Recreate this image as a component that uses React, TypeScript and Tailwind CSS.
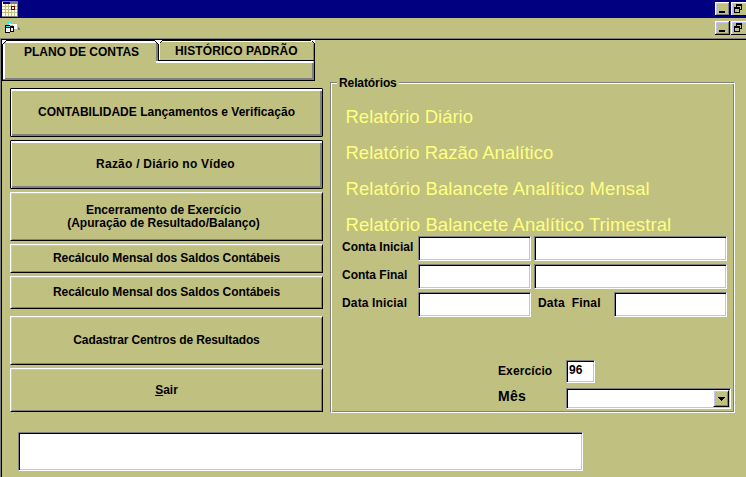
import React from "react";

const raised =
  "border border-t-white border-l-white border-r-black border-b-black shadow-[inset_1px_1px_0_#c0c0ff,inset_-1px_-1px_0_#808080]";

function Field({ className = "", children }: { className?: string; children?: React.ReactNode }) {
  return (
    <div
      className={`shrink-0 border border-t-[#808080] border-l-[#808080] border-r-white border-b-white bg-white shadow-[inset_1px_1px_0_#000,inset_-1px_-1px_0_#c0c0ff] ${className}`}
    >
      {children}
    </div>
  );
}

function PushButton({
  className = "",
  framed = false,
  children,
}: {
  className?: string;
  framed?: boolean;
  children: React.ReactNode;
}) {
  const look = framed
    ? "rounded-[1px] border border-black shadow-[inset_1px_2px_0_#fff,inset_-2px_-2px_0_#808080]"
    : raised;
  return (
    <button
      className={`flex w-[313px] shrink-0 items-center justify-center text-center leading-[13px] font-bold whitespace-nowrap ${look} ${className}`}
    >
      {children}
    </button>
  );
}

function WindowButtons() {
  return (
    <div className="flex h-[14px] w-[31px] gap-px overflow-hidden">
      <svg width="15" height="14" shapeRendering="crispEdges">
        <path fill="#000" d="M0 0h15v14H0z" />
        <path fill="#fff" d="M0 0h14v1H1v12H0z" />
        <path fill="#808080" d="M1 1h13v12H1z" />
        <path fill="#c0c0ff" d="M1 1h12v11H1z" />
        <path fill="#c0c080" d="M2 2h11v10H2z" />
        <path fill="#000" d="M4 9h6v2H4z" />
      </svg>
      <svg width="15" height="14" shapeRendering="crispEdges">
        <path fill="#000" d="M0 0h15v14H0z" />
        <path fill="#fff" d="M0 0h15v1H1v12H0z" />
        <path fill="#c0c0ff" d="M1 1h14v12H1z" />
        <path fill="#c0c080" d="M2 2h13v11H2z" />
        <path fill="#000" fillRule="evenodd" d="M5 2h6v6H9v3H3V5h2zM6 4v1h3v2h1V4zM4 7v3h4V7z" />
      </svg>
    </div>
  );
}

function CalendarIcon() {
  return (
    <svg width="16" height="16" shapeRendering="crispEdges">
      <path fill="#ffffe8" d="M0 0h16v15H0z" />
      <path fill="#808080" d="M0 0h16v1H0zM8 0h8v3H8z" />
      <path fill="#000080" d="M1 1h7v2H1z" />
      <path
        stroke="#c0c080"
        fill="none"
        d="M0 5.500h15M0 8.500h15M0 11.500h15M3.500 3v12M6.500 3v12M9.500 3v12M12.500 3v12"
      />
      <path stroke="#800000" fill="none" d="M9.500 5.500h3v3h-3z" />
      <path fill="#808080" d="M15 3h1v12h-1zM0 15h16v1H0z" />
    </svg>
  );
}

function FormsIcon() {
  return (
    <svg width="16" height="14" shapeRendering="crispEdges">
      <path fill="#fff" d="M4 2h8v6H4z" />
      <path fill="#0ff" d="M3 1h4v1H3zM6 2h6v1H6z" />
      <path fill="#808080" d="M13 6h1v1h1v2h-2z" />
      <path fill="#000" d="M0 4h8v1h1v6H5v1H0z" />
      <path fill="#fff" d="M1 7h4v4H1zM6 7h2v3H6z" />
      <path fill="#0ff" d="M1 5h4v1H1zM5 4h3v1H5z" />
    </svg>
  );
}

function Tabs() {
  return (
    <div className="relative h-[41px] w-[313px]">
      <svg className="absolute inset-0" width="313" height="41" shapeRendering="crispEdges">
        <path fill="#000" d="M0 0h313v1H0zM312 0h1v41h-1zM0 40h313v1H0zM0 0h1v41H0z" />
        <path fill="#808080" d="M1 38h311v2H1zM310 23h2v17h-2z" />
        <path fill="#fff" d="M1 4h2v35H1zM4 1h150v2H4zM158 1h152v1H158z" />
        <path fill="#fff" d="M0 0h4v2H3v1H2v1H0zM153 0h7v1h-1v1h-1v1h-1v1h-1V3h-1V2h-1V1h-1zM309 0h4v4h-1V3h-1V2h-1V1h-1z" />
        <path fill="#000" d="M1 3h1v1H1zM2 2h1v1H2zM3 1h1v1H3zM153 1h1v1h1v1h1v1h1V3h1V2h1V1h1v1h-1v1h-1v1h-1v16h-1V4h-1V3h-1V2h-1zM310 1h1v1h1v1h1v1h-1V3h-1V2h-1zM156 20h156v1H156z" />
        <path fill="#808080" d="M154 3h1v18h-1zM155 4h1v17h-1zM311 4h1v16h-1z" />
        <path fill="#fff" d="M157 3h1v17h-1zM154 21h157v2H154z" />
      </svg>
      <div className="relative flex pt-[4px] leading-[16px] font-bold whitespace-nowrap">
        <span className="w-[150px] pl-[22px]">PLANO DE CONTAS</span>
        <span className="-mt-px pl-[23px] tracking-[0.1px]">HISTÓRICO PADRÃO</span>
      </div>
    </div>
  );
}

function Reports() {
  return (
    <section className="mt-[42px] ml-[7px] h-[331px] w-[405px] border border-[#808080] border-r-white border-b-white shadow-[inset_1px_1px_0_#fff,inset_-1px_-1px_0_#808080]">
      <h2 className="-mt-[8px] ml-[6px] h-[16px] w-[62px] bg-[#c0c080] pl-[2px] leading-[16px] font-bold tracking-[-0.1px]">
        Relatórios
      </h2>
      <div className="mt-[8px] ml-[14.5px] h-[144px] text-[18.5px] leading-[36px] whitespace-nowrap text-[#ffff80]">
        <p>Relatório Diário</p>
        <p>Relatório Razão Analítico</p>
        <p className="tracking-[0.08px]">Relatório Balancete Analítico Mensal</p>
        <p className="tracking-[0.07px]">Relatório Balancete Analítico Trimestral</p>
      </div>
      <div className="-mt-[7px] ml-[11px] flex flex-col gap-[3px] font-bold whitespace-nowrap">
        <div className="flex h-[25px]">
          <label className="w-[76px] leading-[22px]">Conta Inicial</label>
          <Field className="w-[113px]" />
          <Field className="ml-[3px] w-[193px]" />
        </div>
        <div className="flex h-[25px]">
          <label className="w-[76px] leading-[22px]">Conta Final</label>
          <Field className="w-[113px]" />
          <Field className="ml-[3px] w-[193px]" />
        </div>
        <div className="flex h-[25px]">
          <label className="w-[76px] leading-[22px] tracking-[0.15px]">Data Inicial</label>
          <Field className="w-[113px]" />
          <label className="w-[83px] pl-[7px] leading-[22px] tracking-[0.18px] whitespace-pre">Data  Final</label>
          <Field className="w-[113px]" />
        </div>
      </div>
      <div className="mt-[43px] ml-[167px] flex flex-col gap-[5px] font-bold">
        <div className="flex h-[23px]">
          <label className="w-[68px] leading-[22px] tracking-[0.1px]">Exercício</label>
          <Field className="w-[29px] pl-[2px] leading-[19px]">96</Field>
        </div>
        <div className="flex h-[21px]">
          <label className="w-[68px] text-[14px] leading-[17px] tracking-[0.3px]">Mês</label>
          <Field className="flex w-[165px] justify-end p-px">
            <div className={`flex h-[17px] w-[16px] items-center justify-center bg-[#c0c080] ${raised}`}>
              <svg width="7" height="4" shapeRendering="crispEdges">
                <path d="M0 0h7v1H6v1H5v1H4v1H3V3H2V2H1V1H0z" />
              </svg>
            </div>
          </Field>
        </div>
      </div>
    </section>
  );
}

export default function App() {
  return (
    <main className="h-[477px] w-[746px] overflow-hidden bg-[#c0c080] font-['Liberation_Sans',sans-serif] text-[12px] text-black">
      <header className="flex h-[18px] justify-between bg-[#000080] pt-px pl-[2px]">
        <CalendarIcon />
        <div className="pt-px">
          <WindowButtons />
        </div>
      </header>
      <div className="flex h-[20px] justify-between pt-[3px] pl-[5px]">
        <FormsIcon />
        <WindowButtons />
      </div>
      <div className="h-[439px] border-t border-l border-[#808080]">
        <div className="h-[438px] border-t border-l border-black">
          <div className="flex h-[392px]">
            <div className="w-[321px] shrink-0">
              <Tabs />
              <div className="mt-[7px] ml-[8px] flex flex-col">
                <PushButton framed className="h-[49px] tracking-[0.03px]">
                  CONTABILIDADE Lançamentos e Verificação
                </PushButton>
                <PushButton framed className="mt-[3px] h-[49px] pr-[2px] tracking-[0.24px]">
                  Razão / Diário no Vídeo
                </PushButton>
                <PushButton className="mt-[3px] h-[49px] pr-[6px] tracking-[0.02px]">
                  Encerramento de Exercício
                  <br />
                  (Apuração de Resultado/Balanço)
                </PushButton>
                <PushButton className="mt-[3px] h-[29px] tracking-[-0.06px]">
                  Recálculo Mensal dos Saldos Contábeis
                </PushButton>
                <PushButton className="mt-[3px] h-[33px] tracking-[-0.06px]">
                  Recálculo Mensal dos Saldos Contábeis
                </PushButton>
                <PushButton className="mt-[7px] h-[49px] tracking-[-0.12px]">Cadastrar Centros de Resultados</PushButton>
                <PushButton className="mt-[3px] h-[44px]">
                  <span>
                    <u className="underline-offset-1">S</u>air
                  </span>
                </PushButton>
              </div>
            </div>
            <Reports />
          </div>
          <Field className="ml-[16px] h-[39px] w-[565px]" />
        </div>
      </div>
    </main>
  );
}
